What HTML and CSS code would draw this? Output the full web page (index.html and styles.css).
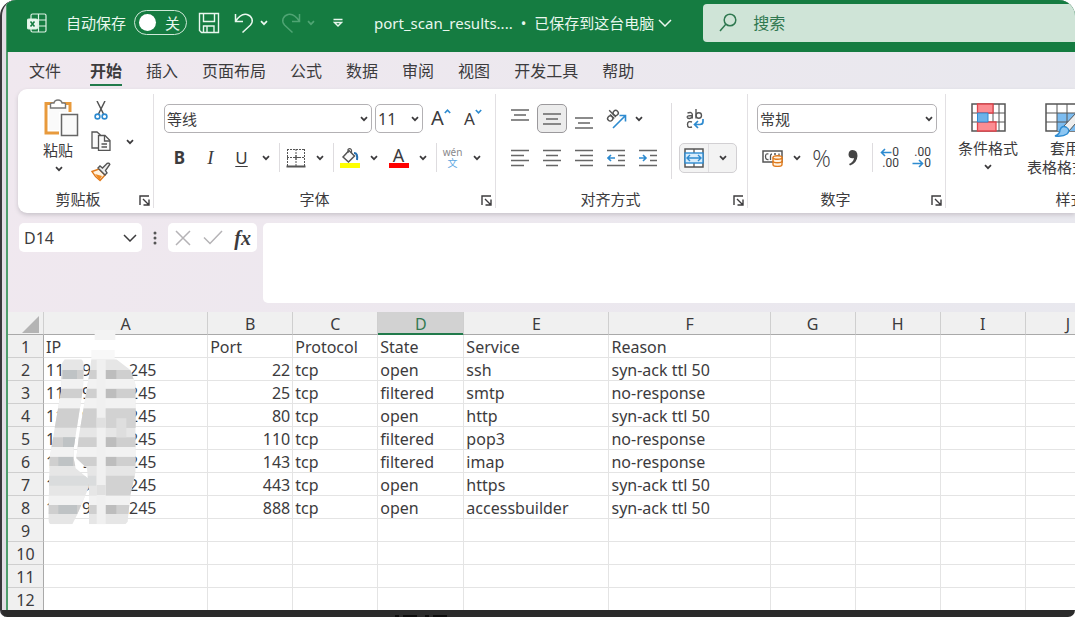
FILE: index.html
```html
<!DOCTYPE html>
<html lang="zh-CN">
<head>
<meta charset="utf-8">
<title>port_scan_results - Excel</title>
<link rel="stylesheet" href="styles.css">
</head>
<body>
<svg class="defs" aria-hidden="true">
  <symbol id="chev" viewBox="0 0 8 6"><path d="M1 1.2 4 4.2 7 1.2" fill="none" stroke="currentColor" stroke-width="1.7"/></symbol>
  <symbol id="chev-lg" viewBox="0 0 14 8"><path d="M1 1 7 7 13 1" fill="none" stroke="currentColor" stroke-width="1.5"/></symbol>
  <symbol id="launch" viewBox="0 0 11 11"><path d="M1 10V1H10M4 4 9.5 9.5M10 4.5V10H4.500" fill="none" stroke="currentColor" stroke-width="1.4"/></symbol>
</svg>
<div class="desktop">
<div class="app">
  <header class="titlebar">
    <svg class="logo" viewBox="0 0 20 20" fill="none" stroke="#dff3e6" stroke-width="1.2"><rect x="4" y="1" width="15" height="18" rx="1.500"/><path d="M11.500 1V19M4 7H19M11 13H19"/><rect x=".5" y="6" width="10" height="10" rx="1.500" fill="#e9f7ee"/><path d="M3.500 8.500 7.500 13.500M7.500 8.500 3.500 13.500" stroke="#157c41" stroke-width="1.600"/></svg>
    <label class="autosave">自动保存<input type="checkbox"><span class="toggle"><span class="knob"></span>关</span></label>
    <button class="tb save" aria-label="保存"><svg width="22" height="22" viewBox="0 0 22 22" fill="none" stroke="currentColor" stroke-width="1.400"><path d="M1.500 1.500H20.500V20.500H3.500L1.500 18.500Z"/><path d="M5.500 1.500V9.500H16.500V1.500M5.500 20.500V14H16V20.500M9 14V20"/></svg></button>
    <button class="tb undo" aria-label="撤消"><svg width="20" height="22" viewBox="0 0 20 22" fill="none" stroke="currentColor" stroke-width="1.500"><path d="M1.500 2V9.500H9M1.500 9.500C5 4 9 1.500 13 2.500C18 4 20 9 16.500 13L8.500 20.500"/></svg><svg class="chev"><use href="#chev"/></svg></button>
    <button class="tb redo" aria-label="恢复"><svg width="20" height="22" viewBox="0 0 20 22" fill="none" stroke="currentColor" stroke-width="1.500"><path d="M18.500 2V9.500H11M18.500 9.500C15 4 11 1.500 7 2.500C2 4 0 9 3.500 13L11.500 20.500"/></svg><svg class="chev"><use href="#chev"/></svg></button>
    <button class="tb custom" aria-label="自定义"><svg width="10" height="10" viewBox="0 0 10 10" fill="none" stroke="currentColor" stroke-width="1.500"><path d="M.5 1.500H9.500M1.500 4.500 5 8 8.500 4.500Z"/></svg></button>
    <button class="doc"><span>port_scan_results....</span><span class="dot">•</span><span>已保存到这台电脑</span><svg class="chev-lg"><use href="#chev-lg"/></svg></button>
    <label class="search"><svg width="18" height="20" viewBox="0 0 18 20" fill="none" stroke="currentColor" stroke-width="1.500"><circle cx="11" cy="7" r="5.800"/><path d="M7 11 1 18"/></svg><input type="text" placeholder="搜索"></label>
  </header>

  <nav class="tabs">
    <button class="file">文件</button><button class="active">开始</button><button>插入</button><button>页面布局</button><button>公式</button><button>数据</button><button>审阅</button><button>视图</button><button>开发工具</button><button>帮助</button>
  </nav>

  <main class="ribbon">
    <section class="group clipboard">
      <div class="body">
        <button class="big paste"><svg width="36" height="38" viewBox="0 0 36 38" fill="none"><path d="M3 4.500H27V34H3Z" fill="#fff" stroke="#e89a3c" stroke-width="3"/><path d="M6 7H24V31H6Z" fill="#fafafa"/><path d="M7.500 9V5Q7.500 4 9 4H11Q11.500 1 15 1T19 4H21Q22.500 4 22.500 5V9Z" fill="#fff" stroke="#777" stroke-width="1.400"/><path d="M16 13H36V38H16Z" fill="#fff"/><rect x="18.500" y="15.500" width="16" height="21" fill="#fafafa" stroke="#666" stroke-width="1.500"/></svg><span>粘贴</span><svg class="chev"><use href="#chev"/></svg></button>
        <div class="stack">
          <button aria-label="剪切"><svg width="14" height="19" viewBox="0 0 14 19" fill="none"><path d="M3 0 9.500 13M11 0 4.500 13" stroke="#555" stroke-width="1.500"/><circle cx="3.500" cy="15.500" r="2.400" stroke="#2e8bd0" stroke-width="1.600"/><circle cx="10.500" cy="15.500" r="2.400" stroke="#2e8bd0" stroke-width="1.600"/></svg></button>
          <button aria-label="复制"><svg width="20" height="20" viewBox="0 0 20 20" fill="#fafafa" stroke="#555" stroke-width="1.300"><path d="M9 17H1V1H6L9.500 4"/><path d="M7.500 4.500H14L19 9.500V19.300H7.500Z"/><path d="M13.500 4.500V10H19M10.500 13H16M10.500 16H16" fill="none"/></svg></button>
          <button aria-label="格式刷"><svg width="20" height="20" viewBox="0 0 20 20"><path d="M1 9.500 8 7 14 13 9 18.500Q4 15 1 9.500Z" fill="#fff3e2" stroke="#e07a1c" stroke-width="1.500"/><path d="M4 12 11 14 8.500 18Z" fill="#ee8a22"/><path d="M7 6 9 4 11.500 6 16 1.500Q18 .5 18.800 2.500L14.500 8.500 16 11 14 13Z" fill="#eee" stroke="#555" stroke-width="1.400"/></svg></button>
        </div>
        <button class="drop copy-drop" aria-label="复制选项"><svg class="chev"><use href="#chev"/></svg></button>
      </div>
      <footer><span>剪贴板</span><button aria-label="剪贴板选项"><svg class="launch"><use href="#launch"/></svg></button></footer>
    </section>

    <section class="group font">
      <div class="body rows">
        <div class="row">
          <label class="combo face"><select aria-label="字体"><option>等线</option></select><svg class="chev"><use href="#chev"/></svg></label>
          <label class="combo size"><select aria-label="字号"><option>11</option></select><svg class="chev"><use href="#chev"/></svg></label>
          <button class="grow" aria-label="增大字号"><span class="glyph">A</span><svg width="7" height="5" viewBox="0 0 7 5"><path d="M.8 4 3.500 1.200 6.200 4" fill="none" stroke="#2e8bd0" stroke-width="1.600"/></svg></button>
          <button class="grow shrink" aria-label="减小字号"><span class="glyph">A</span><svg width="7" height="5" viewBox="0 0 7 5"><path d="M.8 1 3.500 3.800 6.200 1" fill="none" stroke="#2e8bd0" stroke-width="1.600"/></svg></button>
        </div>
        <div class="row">
          <button class="ib"><b>B</b></button><button class="ib ital"><i>I</i></button><button class="ib"><u>U</u></button><button class="drop" aria-label="下划线选项"><svg class="chev"><use href="#chev"/></svg></button>
          <span class="sep"></span>
          <button class="ib" aria-label="边框"><svg width="20" height="20" viewBox="0 0 20 20" fill="none" stroke="#555"><path d="M1 1.500H19M1.500 1V18M18.500 1V18M10 1V18M1 9.500H19" stroke-dasharray="2 1"/><path d="M7 9.500H13M10 7V12"/><path d="M.5 18.500H19.500" stroke-width="2"/></svg></button><button class="drop" aria-label="边框选项"><svg class="chev"><use href="#chev"/></svg></button>
          <span class="sep"></span>
          <button class="ib" aria-label="填充颜色"><svg width="20" height="20" viewBox="0 0 20 20" fill="none"><path d="M3 9 9 2.500 14.500 8 8.500 14Z" fill="#fafafa" stroke="#555" stroke-width="1.500"/><path d="M8 5V1.500Q10-.5 11.500 2V5" stroke="#555" stroke-width="1.200"/><path d="M14 5Q18 5 17 12" stroke="#256fb0" stroke-width="2"/><rect y="15" width="20" height="5" fill="#ff0"/></svg></button><button class="drop" aria-label="填充选项"><svg class="chev"><use href="#chev"/></svg></button>
          <button class="ib color" aria-label="字体颜色"><span>A</span></button><button class="drop" aria-label="字体颜色选项"><svg class="chev"><use href="#chev"/></svg></button>
          <span class="sep"></span>
          <button class="ib wen"><span>wén</span><span class="zi">文</span></button><button class="drop" aria-label="拼音选项"><svg class="chev"><use href="#chev"/></svg></button>
        </div>
      </div>
      <footer><span>字体</span><button aria-label="字体设置"><svg class="launch"><use href="#launch"/></svg></button></footer>
    </section>

    <section class="group align">
      <div class="body">
        <div class="rows">
          <div class="row">
            <button class="al" aria-label="顶端对齐"><svg width="18" height="20" viewBox="0 0 18 20" stroke="#666" stroke-width="1.600"><path d="M0 1H18M3 6H15M0 11H18"/></svg></button>
            <button class="al on" aria-label="垂直居中"><svg width="18" height="20" viewBox="0 0 18 20" stroke="#666" stroke-width="1.600"><path d="M0 5H18M3 10H15M0 15H18"/></svg></button>
            <button class="al" aria-label="底端对齐"><svg width="18" height="20" viewBox="0 0 18 20" stroke="#666" stroke-width="1.600"><path d="M0 9H18M3 14H15M0 19H18"/></svg></button>
            <button class="al" aria-label="方向"><svg width="22" height="22" viewBox="0 0 22 22" fill="none"><g stroke="#555" stroke-width="1.400" transform="rotate(-45 7 8)"><circle cx="4" cy="8.500" r="2.600"/><path d="M6.800 5.500V11.500M9 2V11.500"/><circle cx="11.700" cy="8.500" r="2.600"/></g><path d="M8 20 20 8M14.500 7.500H20.500V13.500" stroke="#2e8bd0" stroke-width="1.600"/></svg></button><button class="drop narrow" aria-label="方向选项"><svg class="chev"><use href="#chev"/></svg></button>
          </div>
          <div class="row">
            <button class="al" aria-label="左对齐"><svg width="18" height="18" viewBox="0 0 18 18" stroke="#666" stroke-width="1.600"><path d="M0 1.500H18M0 6.500H13M0 11.500H18M0 16.500H13"/></svg></button>
            <button class="al" aria-label="居中"><svg width="18" height="18" viewBox="0 0 18 18" stroke="#666" stroke-width="1.600"><path d="M0 1.500H18M3 6.500H15M0 11.500H18M3 16.500H15"/></svg></button>
            <button class="al" aria-label="右对齐"><svg width="18" height="18" viewBox="0 0 18 18" stroke="#666" stroke-width="1.600"><path d="M0 1.500H18M5 6.500H18M0 11.500H18M5 16.500H18"/></svg></button>
            <button class="al" aria-label="减少缩进量"><svg width="18" height="18" viewBox="0 0 18 18" fill="none" stroke="#666" stroke-width="1.600"><path d="M0 1.500H18M11 6.500H18M11 11.500H18M0 16.500H18"/><path d="M8 9H1.500M4 6 1 9 4 12" stroke="#2e8bd0"/></svg></button>
            <button class="al" aria-label="增加缩进量"><svg width="18" height="18" viewBox="0 0 18 18" fill="none" stroke="#666" stroke-width="1.600"><path d="M0 1.500H18M11 6.500H18M11 11.500H18M0 16.500H18"/><path d="M0 9H6.500M4 6 7 9 4 12" stroke="#2e8bd0"/></svg></button>
          </div>
        </div>
        <span class="sep tall"></span>
        <div class="rows">
          <div class="row"><button class="al wrap" aria-label="自动换行"><svg width="18" height="20" viewBox="0 0 18 20" fill="none" stroke="#555" stroke-width="1.400"><path d="M1.500 4Q6 2.500 6.300 5.500V9.500M6.300 6.500Q1 6.500 1.200 8.200C1.500 10 5.500 10 6.300 7.500M10 0V9.500"/><circle cx="12.800" cy="6.500" r="2.700"/><path d="M6 13Q1.500 11.500 1.500 15.500T6 18"/><path d="M17 10V12.500Q17 15.500 14 15.500H8.500M12 12 8.500 15.500 12 19" stroke="#2e8bd0" stroke-width="1.700"/></svg></button></div>
          <div class="row"><div class="merge"><button aria-label="合并后居中"><svg width="20" height="20" viewBox="0 0 20 20" fill="none"><rect x="1" y="1" width="18" height="18" fill="#fff" stroke="#555" stroke-width="1.500"/><path d="M10 1V5M10 15V19" stroke="#555" stroke-width="1.300"/><rect x="1" y="5" width="18" height="10" fill="#d9edfb" stroke="#2e8bd0" stroke-width="1.400"/><path d="M3.500 10H16.500M6 7 3 10 6 13M14 7 17 10 14 13" stroke="#2e8bd0" stroke-width="1.400"/></svg></button><button class="md" aria-label="合并选项"><svg class="chev"><use href="#chev"/></svg></button></div></div>
        </div>
      </div>
      <footer><span>对齐方式</span><button aria-label="对齐设置"><svg class="launch"><use href="#launch"/></svg></button></footer>
    </section>

    <section class="group number">
      <div class="body rows">
        <div class="row"><label class="combo fmt"><select aria-label="数字格式"><option>常规</option></select><svg class="chev"><use href="#chev"/></svg></label></div>
        <div class="row">
          <button class="ib" aria-label="会计数字格式"><svg width="21" height="18" viewBox="0 0 21 18" fill="none"><rect x="1" y="2" width="19" height="11" stroke="#555" stroke-width="1.500"/><path d="M6.500 5Q3.500 4 3.500 7.500T6.500 10.500M8.500 11V7Q8.500 5 10 5M12 5H14M17 4.500V7" stroke="#555" stroke-width="1.300"/><path d="M11 8.500V15.500C11 18 20 18 20 15.500V8.500" fill="#fff3e2" stroke="#e07a1c" stroke-width="1.400"/><ellipse cx="15.500" cy="8.500" rx="4.500" ry="1.800" fill="#fff3e2" stroke="#e07a1c" stroke-width="1.400"/><path d="M11 12C11 14.300 20 14.300 20 12" stroke="#e07a1c" stroke-width="1.400"/></svg></button><button class="drop" aria-label="会计选项"><svg class="chev"><use href="#chev"/></svg></button>
          <button class="ib pct">%</button>
          <button class="ib" aria-label="千位分隔"><svg width="10" height="16" viewBox="0 0 10 16"><path d="M4.500 0Q9.500 0 9.500 6 9 13 2 15.500L1 14Q5.500 12 6 8 .5 9 .5 4.200 1 0 4.500 0Z" fill="#444"/></svg></button>
          <span class="sep"></span>
          <button class="ib dec"><span><svg width="12" height="9" viewBox="0 0 12 9"><path d="M11.500 4.500H1.500M5 1 1.500 4.500 5 8" fill="none" stroke="#2e8bd0" stroke-width="1.600"/></svg>0</span><span>.00</span></button>
          <button class="ib dec"><span>.00</span><span><svg width="12" height="9" viewBox="0 0 12 9"><path d="M.5 4.500H10.500M7 1 10.500 4.500 7 8" fill="none" stroke="#2e8bd0" stroke-width="1.600"/></svg>0</span></button>
        </div>
      </div>
      <footer><span>数字</span><button aria-label="数字设置"><svg class="launch"><use href="#launch"/></svg></button></footer>
    </section>

    <section class="group styles">
      <div class="body">
        <button class="big"><svg width="35" height="29" viewBox="0 0 35 29" fill="none"><rect x="1" y="1" width="33" height="27" fill="#fff" stroke="#555" stroke-width="1.500"/><path d="M6.500 1V28M28 1V28M1 10H34M1 19H34M22 1V28" stroke="#555"/><path d="M6.500 1H22V10H6.500ZM6.500 19H25V28H6.500Z" fill="#fb8d92" stroke="#e0454d" stroke-width="1.300"/><path d="M6.500 10H17V19H6.500Z" fill="#6cb2e8" stroke="#2e8bd0"/></svg><span>条件格式</span><svg class="chev"><use href="#chev"/></svg></button>
        <button class="big table-style"><svg width="40" height="34" viewBox="0 0 40 34" fill="none"><rect x="1" y="1" width="38" height="27" fill="#fff" stroke="#555" stroke-width="1.500"/><path d="M12 10H39V28H12Z" fill="#7cbcf0"/><path d="M12 1V28M22 1V28M32 1V28M1 10H39M1 19H39" stroke="#555"/><path d="M18 24 32 9 37 13 24 28Z" fill="#eee" stroke="#555"/><path d="M10 33Q15 31 15 27 17 22 21 24 26 27 22 31 18 34 10 33Z" fill="#8cc6f2" stroke="#2e8bd0" stroke-width="1.400"/></svg><span>套用</span><span class="second">表格格式<svg class="chev"><use href="#chev"/></svg></span></button>
      </div>
      <footer><span>样式</span></footer>
    </section>
  </main>

  <div class="formula">
    <label class="namebox"><input type="text" value="D14" aria-label="名称框"><svg class="chev-lg"><use href="#chev-lg"/></svg></label>
    <svg class="dots" width="4" height="14" viewBox="0 0 4 14" fill="#555"><circle cx="2" cy="2" r="1.500"/><circle cx="2" cy="7" r="1.500"/><circle cx="2" cy="12" r="1.500"/></svg>
    <div class="fx"><button aria-label="取消"><svg width="16" height="16" viewBox="0 0 16 16"><path d="M1 1 15 15M15 1 1 15" stroke="#b5b3b6" stroke-width="1.500"/></svg></button><button aria-label="输入"><svg width="20" height="15" viewBox="0 0 20 15"><path d="M1 7.500 7 13.500 19 1" fill="none" stroke="#b5b3b6" stroke-width="1.500"/></svg></button><button class="f"><i>fx</i></button></div>
    <textarea aria-label="编辑栏"></textarea>
  </div>

  <div class="sheet">
    <table>
      <colgroup><col class="c0"><col class="ca"><col class="cn"><col class="cn"><col class="cd"><col class="ce"><col class="cf"><col class="cn"><col class="cn"><col class="cn"><col class="cn"></colgroup>
      <thead><tr><th class="corner"><svg width="17" height="17" viewBox="0 0 17 17"><path d="M17 0V17H0Z" fill="#b4b4b4"/></svg></th><th>A</th><th>B</th><th>C</th><th class="sel">D</th><th>E</th><th>F</th><th>G</th><th>H</th><th>I</th><th>J</th></tr></thead>
      <tbody>
        <tr><th>1</th><td>IP</td><td>Port</td><td>Protocol</td><td>State</td><td>Service</td><td>Reason</td><td></td><td></td><td></td><td></td></tr>
        <tr><th>2</th><td><div class="ip"><span>11</span><span>9</span><span>245</span></div></td><td class="num">22</td><td>tcp</td><td>open</td><td>ssh</td><td>syn-ack ttl 50</td><td></td><td></td><td></td><td></td></tr>
        <tr><th>3</th><td><div class="ip"><span>11</span><span>9</span><span>245</span></div></td><td class="num">25</td><td>tcp</td><td>filtered</td><td>smtp</td><td>no-response</td><td></td><td></td><td></td><td></td></tr>
        <tr><th>4</th><td><div class="ip"><span>11</span><span>9</span><span>245</span></div></td><td class="num">80</td><td>tcp</td><td>open</td><td>http</td><td>syn-ack ttl 50</td><td></td><td></td><td></td><td></td></tr>
        <tr><th>5</th><td><div class="ip"><span>11</span><span>9</span><span>245</span></div></td><td class="num">110</td><td>tcp</td><td>filtered</td><td>pop3</td><td>no-response</td><td></td><td></td><td></td><td></td></tr>
        <tr><th>6</th><td><div class="ip"><span>11</span><span>9</span><span>245</span></div></td><td class="num">143</td><td>tcp</td><td>filtered</td><td>imap</td><td>no-response</td><td></td><td></td><td></td><td></td></tr>
        <tr><th>7</th><td><div class="ip"><span>11</span><span>9</span><span>245</span></div></td><td class="num">443</td><td>tcp</td><td>open</td><td>https</td><td>syn-ack ttl 50</td><td></td><td></td><td></td><td></td></tr>
        <tr><th>8</th><td><div class="ip"><span>11</span><span>9</span><span>245</span></div></td><td class="num">888</td><td>tcp</td><td>open</td><td>accessbuilder</td><td>syn-ack ttl 50</td><td></td><td></td><td></td><td></td></tr>
        <tr><th>9</th><td></td><td></td><td></td><td></td><td></td><td></td><td></td><td></td><td></td><td></td></tr>
        <tr><th>10</th><td></td><td></td><td></td><td></td><td></td><td></td><td></td><td></td><td></td><td></td></tr>
        <tr><th>11</th><td></td><td></td><td></td><td></td><td></td><td></td><td></td><td></td><td></td><td></td></tr>
        <tr><th>12</th><td></td><td></td><td></td><td></td><td></td><td></td><td></td><td></td><td></td><td></td></tr>
      </tbody>
    </table>
    <svg class="mosaic" width="100" height="200" viewBox="130 15 300 600" aria-hidden="true">
      <defs><clipPath id="blur-area"><path d="M195 103H245Q253 108 252 130L250 190 222 370V400L228 430 265 460 266 490 232 570 218 598H155Q146 598 146 580L150 400 170 280 184 200 187 115Z"/><path d="M275 103H350L392 135 408 180V440L392 510 384 590Q380 598 370 598H268V500L262 430 230 400 238 330 262 190 270 140Z"/></clipPath></defs>
      <path d="M285 15H347V45H285Z" fill="#f3f3f3"/><path d="M275 45H345V75H275Z" fill="#fff"/><path d="M275 75H345V105H275Z" fill="#f8f8f8"/>
      <g clip-path="url(#blur-area)">
        <path d="M140 100H420V600H140Z" fill="#e6e6e6"/>
        <path d="M140 135H420V162H140ZM140 192H420V220H140ZM140 250H420V308H140ZM140 337H420V366H140ZM140 395H420V423H140ZM140 540H420V567H140Z" fill="#cfcfcf"/>
        <path d="M190 135H232V162H190ZM190 337H232V366H190ZM176 395H220V423H176ZM176 540H232V567H176Z" fill="#bfc3c5"/>
        <path d="M318 135H350V162H318ZM318 192H350V220H318ZM318 337H350V366H318ZM318 395H350V423H318ZM318 540H350V567H318Z" fill="#bdbdbd"/>
        <path d="M318 250H420V308H318ZM318 452H420V512H318Z" fill="#d2d2d2"/><path d="M350 280H380V337H350Z" fill="#dedede"/>
        <path d="M146 452H290V482H146Z" fill="#dadcdd"/>
        <path d="M140 162H420V190H140ZM140 220H420V250H140ZM140 366H420V395H140ZM140 512H420V540H140Z" fill="#f2f2f2"/>
        <path d="M291 100H318V600H291Z" fill="#f0f0f0"/><path d="M291 278H318V308H291ZM291 480H318V510H291Z" fill="#e0e0e0"/>
      </g>
    </svg>
  </div>
</div>
<div class="below"><svg width="54" height="3" viewBox="0 0 54 3" fill="#0c0c0c"><path d="M0 1H4V3H0ZM8 1H22V3H8ZM30 1H34V3H30ZM38 1H52V3H38Z"/></svg></div>
</div>
</body>
</html>
```
FILE: styles.css
```css
* { box-sizing: border-box; }
body {
  margin: 0;
  background: #fff;
  color: #3c3b3d;
  font: 15px/20px "Noto Sans", "Noto Sans CJK SC", sans-serif;
}
button, input, select, textarea {
  margin: 0;
  padding: 0;
  border: 0;
  background: none;
  color: inherit;
  font: inherit;
}
button { display: flex; align-items: center; justify-content: center; white-space: nowrap; flex: none; }
svg { display: block; flex: none; }
.defs { width: 0; height: 0; position: absolute; }
.chev { width: 8px; height: 6px; }
.chev-lg { width: 14px; height: 8px; }
.launch { width: 11px; height: 11px; }

.desktop {
  margin: 0 5px 5px 0;
  border-radius: 16px 16px 7px 7px;
  border-left: 2px solid #38363a;
  background: #2b2b2b;
  overflow: hidden;
}
.app {
  border-left: 4px solid #e2dde4;
  background: linear-gradient(100deg, #f0e8ef, #e8e8ee);
  box-shadow: inset 2px 0 #4f9c6c;
  padding-left: 2px;
  overflow: hidden;
}

.titlebar {
  display: flex;
  align-items: center;
  height: 52px;
  padding: 0 0 7px 20px;
  margin-left: -1px;
  background: #157c41;
  color: #e9f7ee;
}
.logo { width: 20px; height: 20px; }
.autosave { display: flex; align-items: center; gap: 8px; margin-left: 19px; white-space: nowrap; }
.autosave input { position: absolute; opacity: 0; }
.toggle {
  display: flex;
  align-items: center;
  gap: 9px;
  width: 53px;
  height: 25px;
  padding-left: 4px;
  border: 1px solid #cfe9d8;
  border-radius: 13px;
}
.knob { width: 17px; height: 17px; border-radius: 50%; background: #fff; }
.tb { gap: 6px; }
.save { margin-left: 11px; }
.undo { margin-left: 14px; }
.redo { margin-left: 13px; color: #4fa473; }
.custom { margin-left: 18px; }
.doc { margin-left: 31px; }
.dot { margin: 0 8px; }
.doc .chev-lg { margin-left: 4px; }
.search {
  display: flex;
  align-items: center;
  gap: 16px;
  flex: 1;
  height: 38px;
  margin-left: 31px;
  padding-left: 16px;
  border-radius: 4px 0 0 4px;
  background: #cfe4d7;
  color: #2f7850;
  font-size: 16px;
}
.search input { flex: 1; min-width: 0; }
.search input::placeholder { color: inherit; opacity: 1; }

.tabs { display: flex; height: 37px; padding: 3px 0 0 9px; font-size: 16px; line-height: 29px; }
.tabs button { padding: 2px 12px 0; height: 31px; }
.tabs .file { margin-right: 5px; }
.tabs .active { font-weight: 700; padding: 2px 0 0; margin: 0 12px; box-shadow: inset 0 -2px #217a4b; }

.ribbon {
  display: flex;
  margin-left: 10px;
  padding: 5px 0 5px;
  border-radius: 9px 0 0 9px;
  background: #fff;
  box-shadow: 0 2px 4px #c9c4cb;
  overflow: hidden;
}
.group { flex: none; display: flex; flex-direction: column; height: 114px; border-right: 1px solid #e2e0e3; }
.body { display: flex; flex: none; height: 92px; }
.rows { display: flex; flex-direction: column; padding-top: 10px; gap: 10px; }
.row { display: flex; align-items: center; height: 29px; }
.group footer { position: relative; display: flex; justify-content: center; line-height: 26px; }
.group footer button { position: absolute; right: 3px; top: 9px; }
.clipboard { width: 136px; }
.font { width: 342px; }
.align { width: 252px; }
.number { width: 198px; }
.styles { width: 220px; border: 0; }
.clipboard footer { padding-right: 15px; }
.font footer { padding-right: 20px; }
.align footer, .number footer { padding-right: 22px; }

.big { flex-direction: column; justify-content: flex-start; }
.paste { padding: 5px 0 0 25px; align-items: flex-start; }
.paste span { margin: 3px 0 6px; }
.paste .chev { margin-left: 12px; }
.stack { display: flex; flex-direction: column; gap: 11px; margin-left: 12px; padding-top: 6px; }
.stack button { height: 20px; width: 20px; }
.copy-drop { margin: 35px 0 0 10px; height: 20px; }
.drop { width: 18px; height: 26px; }
.narrow { width: 14px; }

.font .body { padding-left: 10px; }
.number .body { padding-left: 9px; }
.combo { display: grid; height: 29px; border: 1px solid #b3b1b4; border-radius: 5px; align-items: center; }
.combo select { grid-area: 1 / 1; appearance: none; width: 100%; height: 27px; padding-left: 2px; }
.combo .chev { grid-area: 1 / 1; justify-self: end; margin-right: 3px; pointer-events: none; }
.face { width: 208px; margin-right: 3px; }
.size { width: 48px; }
.size select { font-size: 16px; }
.fmt { width: 180px; }
.grow { width: 32px; margin-left: 2px; height: 26px; align-items: flex-start; }
.glyph { font-size: 20px; line-height: 24px; }
.grow svg { margin-top: 3px; }
.shrink .glyph { font-size: 17px; line-height: 26px; }
.shrink { margin-left: 0; }
.ib { width: 31px; height: 26px; font-size: 17px; }
.ital { font-family: "Liberation Serif", serif; font-size: 19px; }
.ib u { text-underline-offset: 2px; }
.sep { width: 1px; height: 29px; margin: 0 0 0 4px; background: #dedcdf; }
.color span { width: 20px; height: 20px; border-bottom: 5px solid #f00; line-height: 15px; font-size: 18px; }
.wen { flex-direction: column; font-size: 10px; line-height: 11px; color: #8a888b; }
.zi { color: #5ea7df; }

.align .body { padding-left: 8px; }
.al { width: 32px; height: 29px; }
.on { width: 30px; margin: 0 1px; border: 1px solid #9b999c; border-radius: 5px; background: #ececec; }
.tall { height: 76px; margin: 9px 7px 0; }
.merge { display: flex; width: 58px; height: 30px; border: 1px solid #d2d0d3; border-radius: 5px; background: #f3f3f3; overflow: hidden; }
.merge button { width: 28px; }
.merge .md { border-left: 1px solid #dedcdf; }
.pct { font: 300 23px/24px "Open Sans", sans-serif; }
.dec { width: 32px; flex-direction: column; align-items: flex-end; padding-right: 6px; font-family: Roboto, sans-serif; font-size: 12px; line-height: 11px; }
.dec span { display: flex; align-items: center; }

.styles .big { margin-left: 12px; padding-top: 9px; line-height: 19px; }
.styles .big span:nth-of-type(1) { margin-top: 7px; }
.styles .big > .chev { margin-top: 6px; }
.styles .table-style { margin-left: 9px; }
.styles .table-style span:nth-of-type(1) { margin-top: 2px; }
.second { display: flex; align-items: center; gap: 8px; }
.styles footer { padding-left: 29px; }

.formula { display: flex; align-items: flex-start; padding: 10px 0 9px 11px; }
.namebox { display: flex; align-items: center; width: 123px; height: 29px; padding: 0 5px; border-radius: 5px; background: #fff; }
.namebox input { flex: 1; min-width: 0; font-size: 16px; }
.dots { margin: 8px 11px 0; }
.fx { display: flex; align-items: center; justify-content: space-between; width: 89px; height: 29px; padding: 0 6px 0 7px; border-radius: 5px; background: #fff; }
.f { font: 700 20px/24px "Liberation Serif", serif; }
.formula textarea { flex: 1; height: 80px; margin-left: 6px; border-radius: 5px 0 0 5px; background: #fff; resize: none; }

.sheet { position: relative; background: #fff; overflow: hidden; }
table { table-layout: fixed; width: 1103px; border-collapse: separate; border-spacing: 0; }
.c0 { width: 36px; }
.ca { width: 164px; }
.cn { width: 85px; }
.cd { width: 86px; }
.ce { width: 145px; }
.cf { width: 161px; }
th, td { height: 23px; padding: 2px 2px 0; border: 0 solid #e4e4e4; border-width: 0 1px 1px 0; line-height: 20px; white-space: nowrap; }
th { background: #f0f0f0; border-color: #cfcfcf; font-weight: 400; font-size: 16px; }
thead th { border-bottom-color: #a9a9a9; padding-top: 2px; }
tbody th { border-right-color: #a9a9a9; }
tbody tr:last-child > * { height: 22px; border-bottom: 0; }
.corner svg { margin: 1px 0 0 12px; }
.sel { background: #d2d2d2; color: #357a52; border-bottom-color: #217a4b; box-shadow: inset 0 -1px #217a4b; }
td { text-align: left; font-size: 16px; }
.num { text-align: right; }
.ip { display: grid; grid-template-columns: 36px 47px auto; }
.mosaic { position: absolute; left: 35px; top: 18px; }
.below { height: 7px; padding: 4px 0 0 393px; }
```
